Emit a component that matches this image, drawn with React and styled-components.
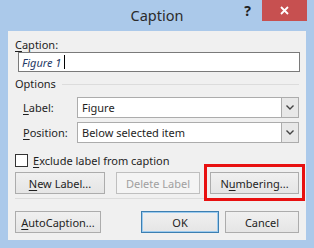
import React from 'react';
import styled, { createGlobalStyle } from 'styled-components';

const Global = createGlobalStyle`
  html, body { margin: 0; padding: 0; background: #abc9ea; }
  body { font-family: "Noto Sans", "Liberation Sans", sans-serif; }
`;

// Outer window frame
const Window = styled.div`
  width: 314px;
  height: 248px;
  background: #abc9ea;
  display: flex;
  flex-direction: column;
  box-sizing: border-box;
`;

const TitleBar = styled.div`
  height: 31px;
  display: grid;
  grid-template-columns: 1fr auto 1fr;
  align-items: start;
`;

const Title = styled.div`
  grid-column: 2;
  font-size: 14.5px;
  line-height: 31px;
  color: #2b2b2b;
`;

const Controls = styled.div`
  grid-column: 3;
  justify-self: end;
  display: flex;
  align-items: flex-start;
  margin-right: 7px;
`;

const HelpGlyph = styled.span`
  font-size: 14px;
  font-weight: bold;
  color: #222;
  line-height: 22px;
  margin-right: 11px;
`;

const CloseButton = styled.div`
  width: 45px;
  height: 21px;
  background: #c75050;
  display: flex;
  align-items: center;
  justify-content: center;
`;

const Panel = styled.div`
  margin: 0 8px;
  height: 209px;
  background: #f0f0f0;
  display: flex;
  flex-direction: column;
  padding: 7px 7px 0 7px;
  box-sizing: border-box;
  font-size: 11px;
  color: #1e1e1e;
`;

const Text = styled.div`
  height: 14px;
  line-height: 14px;
  white-space: nowrap;
`;

const Key = styled.span`
  text-decoration: underline;
  text-underline-offset: 2px;
`;

const CaptionInput = styled.div`
  margin: 0 -1px 0 3px;
  height: 20px;
  border: 1px solid #7a7a7a;
  background: #fff;
  box-sizing: border-box;
  display: flex;
  align-items: center;
  padding-left: 3px;
  font-style: italic;
  color: #1f3a66;
`;

const Caret = styled.span`
  display: inline-block;
  width: 1px;
  height: 14px;
  background: #000;
  margin-left: 3px;
`;

const SectionHead = styled.div`
  margin-top: 5px;
  display: flex;
  align-items: center;
  gap: 6px;
  height: 14px;
  line-height: 14px;
  &::after {
    content: '';
    flex: 1;
    height: 1px;
    background: #dcdcdc;
  }
`;

const FieldRow = styled.div`
  margin-top: ${(p) => p.$top}px;
  display: flex;
  align-items: center;
  height: 21px;
`;

const FieldLabel = styled.div`
  width: 62px;
  padding-left: 8px;
  box-sizing: border-box;
`;

const Combo = styled.div`
  flex: 1;
  height: 21px;
  border: 1px solid #acacac;
  background: #fff;
  box-sizing: border-box;
  display: flex;
  align-items: stretch;
`;

const ComboText = styled.div`
  flex: 1;
  padding-left: 4px;
  line-height: 19px;
`;

const ComboArrow = styled.div`
  width: 16px;
  background: #e8e8e8;
  border-left: 1px solid #acacac;
  display: flex;
  align-items: center;
  justify-content: center;
`;

const CheckRow = styled.div`
  margin-top: 11px;
  display: flex;
  align-items: center;
  gap: 5px;
  height: 13px;
`;

const Box = styled.div`
  width: 13px;
  height: 13px;
  border: 1px solid #333;
  background: #fff;
  box-sizing: border-box;
`;

const ButtonRow = styled.div`
  margin-top: ${(p) => p.$top}px;
  display: flex;
  align-items: center;
`;

const Button = styled.div`
  position: relative;
  width: ${(p) => p.$w}px;
  margin-left: ${(p) => p.$gap || 0}px;
  height: 22px;
  box-sizing: border-box;
  border: 1px solid ${(p) => (p.$default ? '#3c7fb1' : p.$disabled ? '#bfbfbf' : '#acacac')};
  box-shadow: ${(p) => (p.$default ? 'inset 0 0 0 1px #9ccbef' : 'none')};
  background: ${(p) => (p.$disabled ? '#f4f4f4' : 'linear-gradient(#f0f0f0, #e5e5e5)')};
  color: ${(p) => (p.$disabled ? '#a0a0a0' : '#1e1e1e')};
  display: flex;
  align-items: center;
  justify-content: center;
  white-space: nowrap;

  ${(p) =>
    p.$highlight &&
    `
    &::after {
      content: '';
      position: absolute;
      left: -7px;
      right: -7px;
      top: -9px;
      bottom: -8px;
      border: 3px solid #e81010;
    }
  `}
`;

const Separator = styled.div`
  margin: 4px 0 0 0;
  height: 1px;
  background: #dcdcdc;
`;

const Chevron = () => (
  <svg width="8" height="5" viewBox="0 0 8 5">
    <path d="M0.5 0.5 L4 4 L7.5 0.5" fill="none" stroke="#444" strokeWidth="1.4" />
  </svg>
);

const CloseX = () => (
  <svg width="9" height="9" viewBox="0 0 9 9">
    <path d="M1 1 L8 8 M8 1 L1 8" stroke="#fff" strokeWidth="1.8" />
  </svg>
);

export default function App() {
  return (
    <>
      <Global />
      <Window>
        <TitleBar>
          <Title>Caption</Title>
          <Controls>
            <HelpGlyph>?</HelpGlyph>
            <CloseButton>
              <CloseX />
            </CloseButton>
          </Controls>
        </TitleBar>
        <Panel>
          <Text>
            <Key>C</Key>aption:
          </Text>
          <CaptionInput>
            Figure 1<Caret />
          </CaptionInput>
          <SectionHead>Options</SectionHead>
          <FieldRow $top={6}>
            <FieldLabel>
              <Key>L</Key>abel:
            </FieldLabel>
            <Combo>
              <ComboText>Figure</ComboText>
              <ComboArrow>
                <Chevron />
              </ComboArrow>
            </Combo>
          </FieldRow>
          <FieldRow $top={4}>
            <FieldLabel>
              <Key>P</Key>osition:
            </FieldLabel>
            <Combo>
              <ComboText>Below selected item</ComboText>
              <ComboArrow>
                <Chevron />
              </ComboArrow>
            </Combo>
          </FieldRow>
          <CheckRow>
            <Box />
            <Text>
              <Key>E</Key>xclude label from caption
            </Text>
          </CheckRow>
          <ButtonRow $top={5}>
            <Button $w={90}>
              <Key>N</Key>ew Label...
            </Button>
            <Button $w={84} $gap={11} $disabled>
              Delete Label
            </Button>
            <Button $w={89} $gap={10} $highlight>
              N<Key>u</Key>mbering...
            </Button>
          </ButtonRow>
          <Separator />
          <ButtonRow $top={12}>
            <Button $w={86}>
              <Key>A</Key>utoCaption...
            </Button>
            <Button $w={78} $gap={40} $default>
              OK
            </Button>
            <Button $w={74} $gap={6}>
              Cancel
            </Button>
          </ButtonRow>
        </Panel>
      </Window>
    </>
  );
}
